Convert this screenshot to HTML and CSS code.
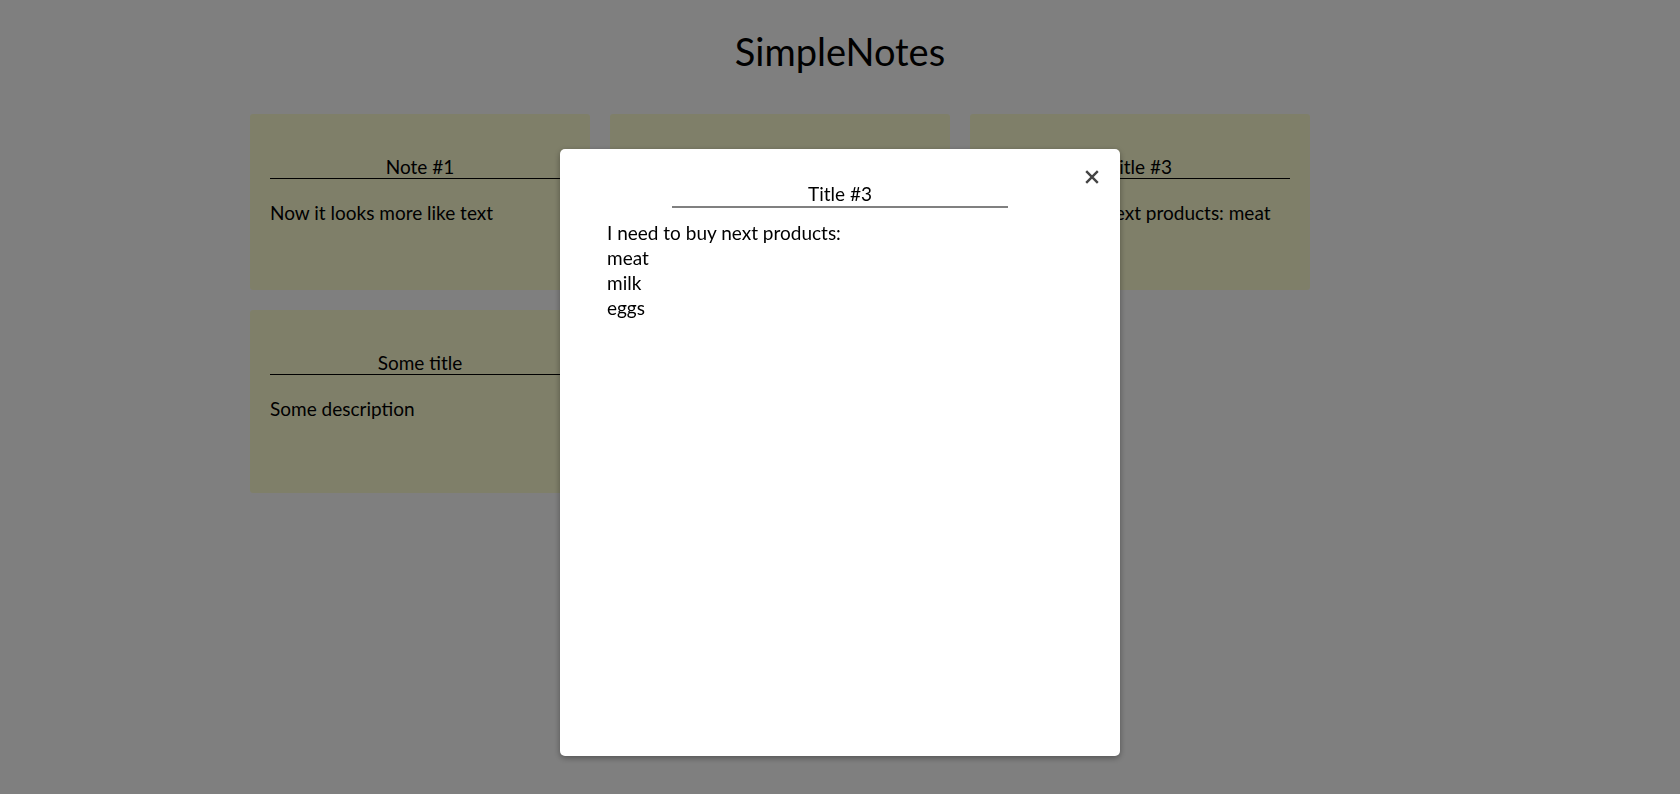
FILE: index.html
```html
<!DOCTYPE html>
<html lang="en">
<head>
<meta charset="utf-8">
<title>SimpleNotes</title>
<link rel="stylesheet" href="styles.css">
</head>
<body>
<header class="app-header">
  <h1 class="app-title">SimpleNotes</h1>
</header>
<main class="notes">
  <article class="note">
    <h2 class="note-title">Note #1</h2>
    <p class="note-text">Now it looks more like text</p>
  </article>
  <article class="note">
    <h2 class="note-title">Note #2</h2>
    <p class="note-text">Second note</p>
  </article>
  <article class="note">
    <h2 class="note-title">Title #3</h2>
    <p class="note-text">I need to buy next products: meat milk eggs</p>
  </article>
  <article class="note note--tall">
    <h2 class="note-title">Some title</h2>
    <p class="note-text">Some description</p>
  </article>
</main>
<div class="overlay">
  <section class="modal">
    <button class="modal-close" aria-label="Close">
      <svg viewBox="0 0 14 14" width="14" height="14" aria-hidden="true">
        <path d="M1.2 1.2 L12.8 12.8 M12.8 1.2 L1.2 12.8" stroke="#444" stroke-width="2.4" stroke-linecap="butt" fill="none"/>
      </svg>
    </button>
    <h2 class="modal-title">Title #3</h2>
    <div class="modal-text">I need to buy next products:
meat
milk
eggs</div>
  </section>
</div>
</body>
</html>
```
FILE: styles.css
```css
* { box-sizing: border-box; }

html, body {
  margin: 0;
  padding: 0;
  background: #ffffff;
}

body {
  font-family: "Lato", "Noto Sans", sans-serif;
  font-size: 19px;
  color: #000;
  min-height: 794px;
}

.app-header {
  text-align: center;
}

.app-title {
  margin: 28px 0 40px;
  font-size: 38px;
  font-weight: 400;
  line-height: normal;
}

.notes {
  width: 1180px;
  margin: 0 auto;
  display: grid;
  grid-template-columns: repeat(auto-fill, 340px);
  gap: 20px;
}

.note {
  background: #fffed3;
  border-radius: 3px;
  padding: 41px 20px 0;
  height: 176px;
  overflow: hidden;
}

.note--tall {
  height: 183px;
}

.note-title {
  margin: 0;
  font-size: 19px;
  font-weight: 400;
  line-height: normal;
  text-align: center;
  border-bottom: 1px solid #000;
}

.note-text {
  margin: 22px 0 0;
  line-height: normal;
}

.overlay {
  position: fixed;
  inset: 0;
  background: rgba(0, 0, 0, 0.5);
  display: flex;
  justify-content: center;
  align-items: flex-start;
  padding-top: 149px;
}

.modal {
  position: relative;
  width: 560px;
  height: 607px;
  background: #fff;
  border-radius: 5px;
  box-shadow: 0 2px 6px rgba(0, 0, 0, 0.35);
  padding-top: 33px;
}

.modal-close {
  position: absolute;
  top: 21px;
  right: 21px;
  width: 14px;
  height: 14px;
  padding: 0;
  border: 0;
  background: none;
  cursor: pointer;
  display: flex;
}

.modal-title {
  width: 60%;
  margin: 0 auto;
  font-size: 19px;
  font-weight: 400;
  line-height: normal;
  text-align: center;
  padding-bottom: 1px;
  border-bottom: 2px solid #808080;
}

.modal-text {
  margin-top: 12px;
  padding: 0 47px;
  line-height: 25px;
  white-space: pre-line;
}
```
